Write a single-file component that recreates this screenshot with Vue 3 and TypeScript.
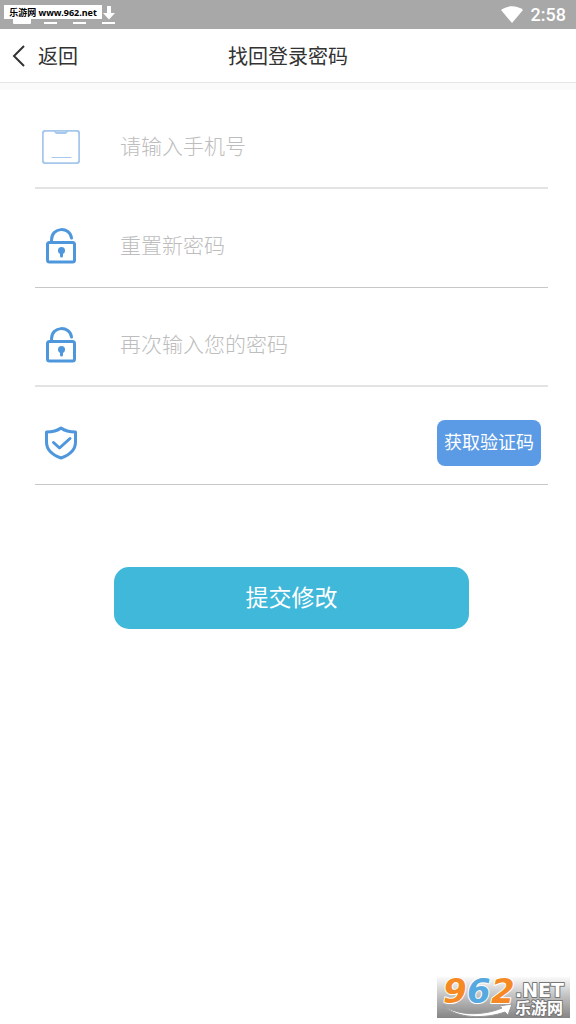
<script setup lang="ts">
import { reactive } from 'vue'

type FieldKey = 'phone' | 'password' | 'confirm' | 'code'
type IconName = 'phone' | 'lock' | 'shield'

interface Field {
  key: FieldKey
  icon: IconName
  label: string
  placeholder: string
  type: string
}

const fields: Field[] = [
  { key: 'phone', icon: 'phone', label: '手机号', placeholder: '请输入手机号', type: 'tel' },
  { key: 'password', icon: 'lock', label: '新密码', placeholder: '重置新密码', type: 'password' },
  { key: 'confirm', icon: 'lock', label: '确认密码', placeholder: '再次输入您的密码', type: 'password' },
  { key: 'code', icon: 'shield', label: '验证码', placeholder: '', type: 'text' },
]

const form = reactive<Record<FieldKey, string>>({ phone: '', password: '', confirm: '', code: '' })
</script>

<template>
  <div class="page">
    <div class="status">
      <svg class="notices" viewBox="0 0 120 28" aria-hidden="true">
        <rect x="13" y="8" width="18" height="16" rx="1" />
        <rect x="44" y="22" width="13" height="2" />
        <rect x="73" y="22" width="13" height="2" />
        <rect x="102" y="22" width="13" height="2" />
        <path d="M107 6h4v7h4l-6 6.500-6-6.500h4z" />
      </svg>
      <span class="site-tag">乐游网 www.962.net</span>
      <svg class="wifi" viewBox="0 0 22 18" aria-hidden="true">
        <path d="M0 4C6-.9 16-.9 22 4L11 17z" />
      </svg>
      <span class="clock">2:58</span>
    </div>

    <header class="bar">
      <button class="back" type="button">
        <svg viewBox="0 0 14 22" aria-hidden="true"><path d="M12 1L2 11l10 10" /></svg>
        <span>返回</span>
      </button>
      <h1>找回登录密码</h1>
    </header>

    <form class="form" @submit.prevent>
      <div v-for="field in fields" :key="field.key" class="row">
        <label :for="field.key" :aria-label="field.label">
          <svg v-if="field.icon === 'phone'" class="phone" viewBox="0 0 38 34" aria-hidden="true">
            <rect x="0.750" y="0.750" width="36.500" height="32.500" rx="3" />
            <path d="M13 1.500q1 1.500 2 1.500h8q1 0 2-1.500" />
            <path class="thin" d="M10 27.500h19" />
          </svg>
          <svg v-else-if="field.icon === 'lock'" class="lock" viewBox="0 0 30 36" aria-hidden="true">
            <path d="M5.500 14v-2C5.500-1.500 24-1.500 25.500 10" />
            <rect x="1.500" y="14.500" width="27" height="19.500" rx="2" />
            <circle class="fill" cx="15.500" cy="22.500" r="3.500" />
            <path d="M15.500 23v5" />
          </svg>
          <svg v-else class="shield" viewBox="0 0 32 34" aria-hidden="true">
            <path d="M16 2C12 5 7 6 1.500 6v10c0 8 6 13 14.500 16 8.500-3 14.500-8 14.500-16V6C25 6 20 5 16 2z" />
            <path d="M8.500 16.500l6 5.500L25 12.500" />
          </svg>
        </label>
        <input
          :id="field.key"
          v-model="form[field.key]"
          :type="field.type"
          :placeholder="field.placeholder"
          autocomplete="off"
        />
        <button v-if="field.key === 'code'" class="get-code" type="button">获取验证码</button>
      </div>
      <button class="submit" type="submit">提交修改</button>
    </form>

    <div class="brand">
      <svg viewBox="0 0 133 41" role="img" aria-label="962.NET 乐游网">
        <defs>
          <linearGradient id="brand-bg" x1="0" y1="0" x2="0" y2="1">
            <stop offset="0" stop-color="#fafafa" />
            <stop offset="0.500" stop-color="#bdbdbd" />
            <stop offset="1" stop-color="#858585" />
          </linearGradient>
        </defs>
        <rect width="133" height="41" fill="url(#brand-bg)" />
        <path class="swoosh" d="M6 28c14 11 40 11 59 3l-3-2 13-2-4 11-3-3C48 42 19 42 6 28z" />
        <g class="digits">
          <text x="6" y="26" fill="#f58a24">9</text>
          <text x="30" y="26" fill="#55a9e0">6</text>
          <text x="54" y="26" fill="#f58a24">2</text>
        </g>
        <text class="net" x="78" y="20">.NET</text>
        <text class="name" x="78" y="37">乐游网</text>
      </svg>
    </div>
  </div>
</template>

<style>
body {
  margin: 0;
  background: #fff;
}
</style>

<style scoped>
.page {
  position: relative;
  min-height: 100vh;
  background: #fff;
  color: #333;
  font-family: Roboto, "Noto Sans CJK SC", sans-serif;
}

button,
input {
  margin: 0;
  padding: 0;
  border: 0;
  background: none;
  color: inherit;
  font-family: inherit;
}

button {
  cursor: pointer;
}

.status {
  position: relative;
  display: flex;
  align-items: center;
  justify-content: flex-end;
  gap: 8px;
  height: 29px;
  padding-right: 10px;
  background: #a8a8a8;
  color: #fff;
}

.notices {
  position: absolute;
  top: 0;
  left: 0;
  width: 120px;
  height: 28px;
  fill: #fff;
}

.site-tag {
  position: absolute;
  top: 5px;
  left: 4px;
  width: 98px;
  height: 14px;
  background: #fff;
  color: #000;
  font: bold 9px/15px "Noto Sans", "Noto Sans CJK SC", sans-serif;
  text-align: center;
  white-space: nowrap;
}

.wifi {
  width: 22px;
  height: 18px;
  fill: #fff;
}

.clock {
  font-size: 18px;
  font-weight: 500;
  line-height: 29px;
}

.bar {
  display: grid;
  grid-template-columns: 1fr auto 1fr;
  align-items: center;
  height: 53px;
  border-bottom: 1px solid #e6e6e6;
}

.back {
  display: flex;
  align-items: center;
  gap: 12px;
  justify-self: start;
  padding-left: 12px;
  font-size: 20px;
  line-height: 32px;
}

.back span,
h1 {
  padding-top: 3px;
}

.back svg {
  width: 14px;
  height: 22px;
  fill: none;
  stroke: #333;
  stroke-width: 2;
}

h1 {
  margin: 0;
  font-size: 20px;
  font-weight: 400;
  line-height: 32px;
}

.form {
  padding: 0 28px 0 35px;
  border-top: 7px solid #fafafa;
}

.row {
  display: flex;
  align-items: center;
  box-sizing: border-box;
  height: 99px;
  padding: 16px 7px 0 0;
  border-bottom: 1px solid #c8c8c8;
}

.row:nth-child(odd) {
  border-bottom: 2px solid #e3e3e3;
}

.row:nth-child(4) {
  height: 98px;
  padding-top: 14px;
}

label {
  display: flex;
  flex: none;
  justify-content: center;
  width: 52px;
  margin-right: 33px;
}

label svg {
  fill: none;
  stroke: #4f97dc;
  stroke-width: 3;
  stroke-linecap: round;
  stroke-linejoin: round;
}

.phone {
  width: 38px;
  height: 34px;
  stroke: #a5c8ec;
  stroke-width: 2;
}

.phone .thin {
  stroke-width: 1;
}

.lock {
  width: 30px;
  height: 36px;
}

.lock .fill {
  fill: #4f97dc;
  stroke: none;
}

.shield {
  width: 32px;
  height: 34px;
}

input {
  flex: 1;
  min-width: 0;
  height: 40px;
  outline: none;
  font-size: 21px;
  font-weight: 300;
}

input::placeholder {
  color: #bdbdbd;
  opacity: 1;
}

.get-code {
  flex: none;
  width: 104px;
  height: 46px;
  padding-bottom: 4px;
  border-radius: 8px;
  background: #5b9ae4;
  color: #fff;
  font-size: 18px;
}

.submit {
  display: block;
  width: calc(100% - 158px);
  height: 62px;
  margin: 82px auto 0;
  padding-bottom: 4px;
  border-radius: 15px;
  background: #3fb8d9;
  color: #fff;
  font-size: 23px;
}

.brand {
  position: absolute;
  right: 6px;
  bottom: 6px;
}

.brand svg {
  display: block;
  width: 133px;
  height: 41px;
  overflow: visible;
}

.brand text {
  stroke: #fff;
  stroke-width: 2;
  stroke-linejoin: round;
  paint-order: stroke;
  font-family: "DejaVu Sans", "Noto Sans CJK SC", sans-serif;
  font-weight: bold;
}

.digits {
  font-size: 34px;
  font-style: italic;
}

.brand .net {
  fill: #fff;
  stroke: #777;
  font-size: 19px;
}

.brand .name {
  fill: #fff;
  stroke: #777;
  font-size: 16px;
}

.swoosh {
  fill: #fff;
  stroke: #999;
  stroke-width: 1;
}
</style>
